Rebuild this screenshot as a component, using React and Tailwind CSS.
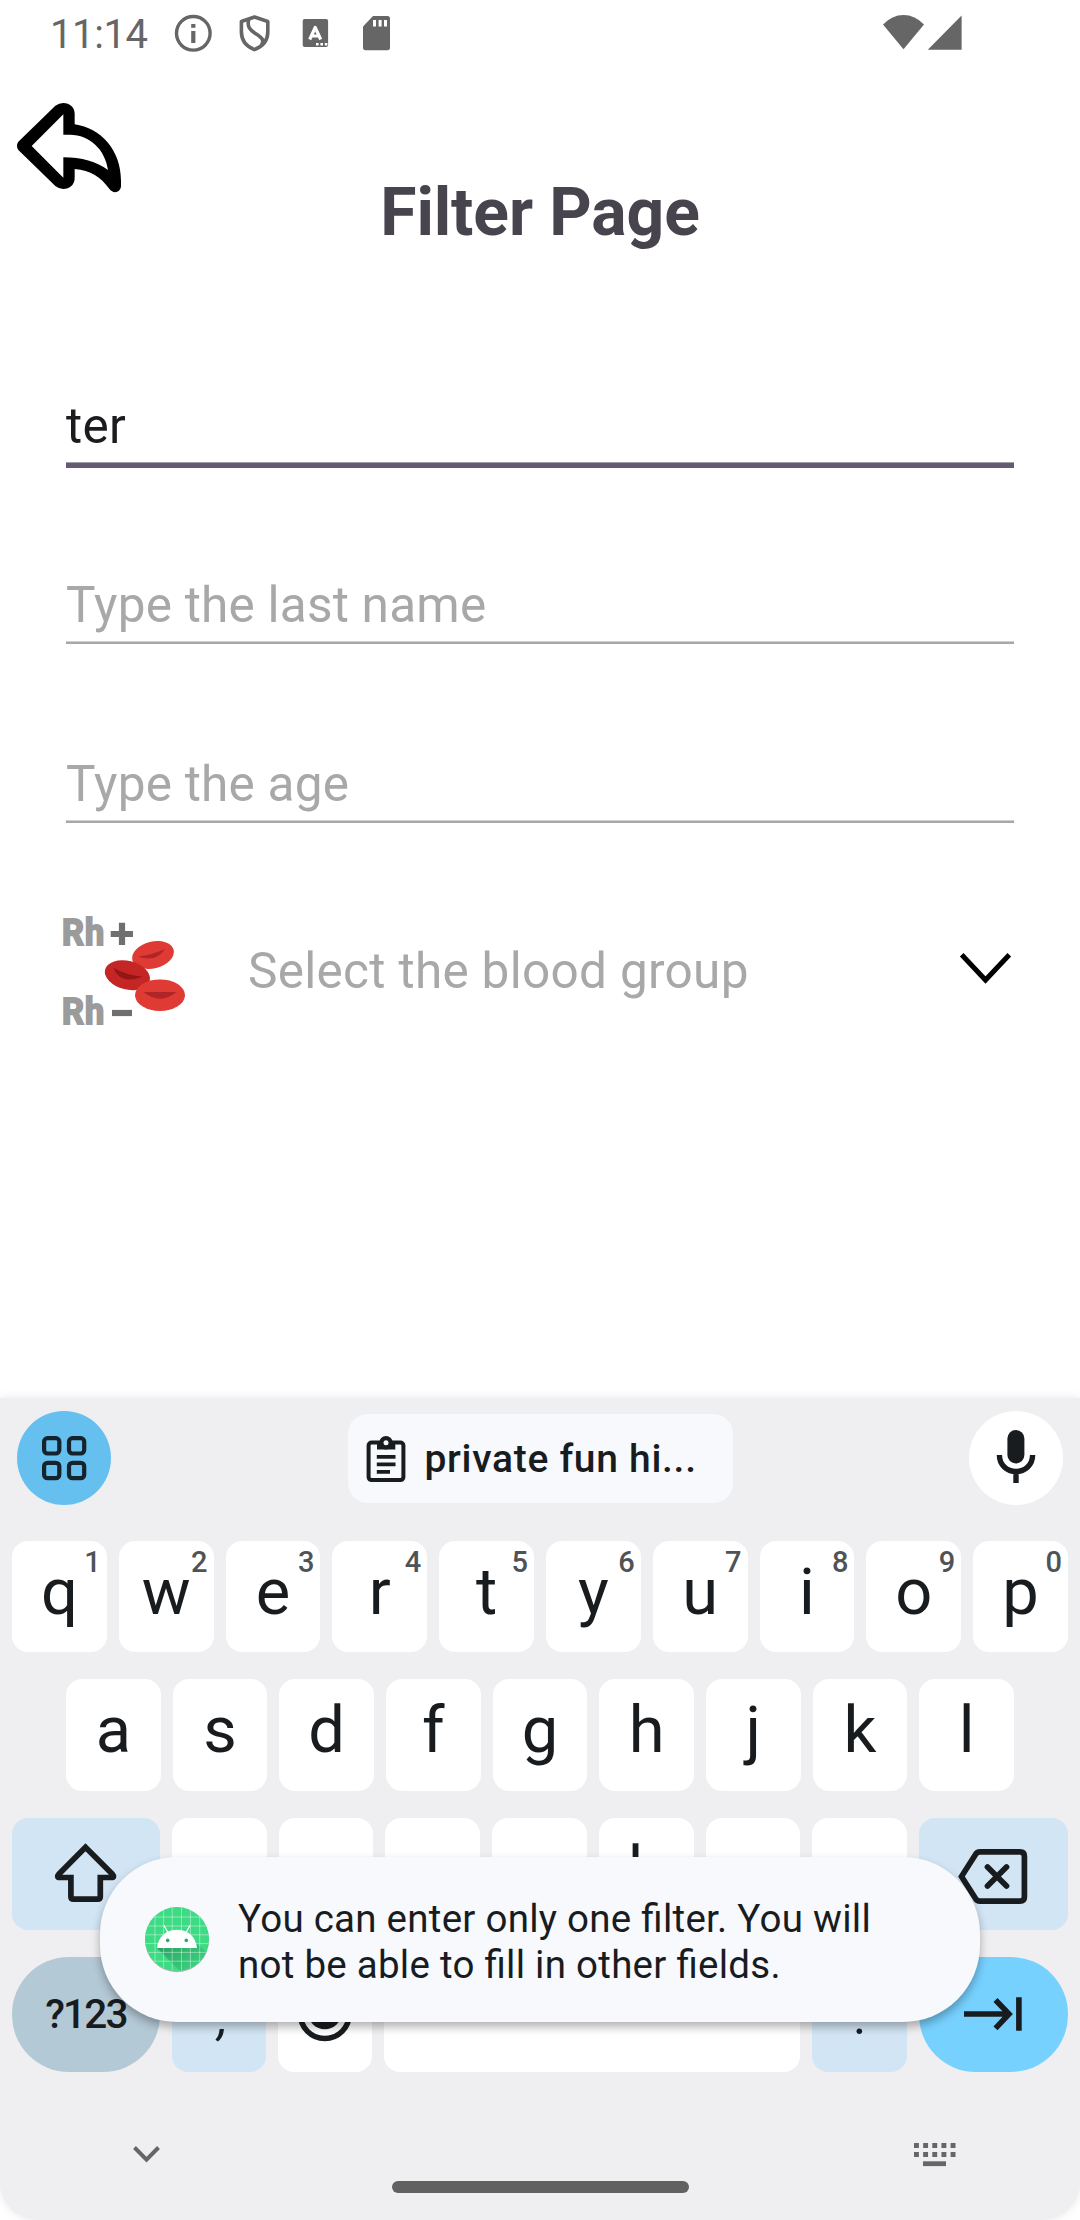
import React from "react";

const INK = "#191c1f";

function StatusBar() {
  return (
    <div className="flex h-[69px] items-center pl-[50px] text-[#666]">
      <span className="mr-[-12px] w-[134px] text-[40px] leading-[69px] tracking-[-0.4px]">11:14</span>
      <svg width="42" height="43" viewBox="172 13 42 43">
        <circle cx="193.3" cy="33.3" r="16.8" fill="none" stroke="#666" strokeWidth="3.4" />
        <rect x="191.2" y="24" width="4.2" height="3.8" fill="#666" />
        <rect x="191.2" y="31" width="4.2" height="12" fill="#666" />
      </svg>
      <svg className="ml-[18px]" width="45" height="43" viewBox="232 13 45 43" fill="none" stroke="#666" strokeWidth="3.6">
        <path d="M254.5 17L267.8 21.5V32C267.8 40.5 262.5 46.5 254.5 49.6C246.5 46.5 241.4 40.5 241.4 32V21.5Z" strokeLinejoin="round" />
        <path d="M248.6 19.5C247 27 250 30 255 33.2C262 37.5 265 40 261 46" />
      </svg>
      <svg className="ml-[18px]" width="42" height="43" viewBox="295 13 42 43">
        <rect x="302.7" y="19" width="25.4" height="28" rx="2" fill="#666" />
        <path d="M309.7 39.5L315.2 27.5L320.7 39.5M311.5 36H319" fill="none" stroke="#fff" strokeWidth="3.2" strokeLinejoin="round" />
        <path d="M316 43h2.6v2.4H316zM320.4 43h2.6v2.4h-2.6zM324.8 43h2.6v2.4h-2.6z" fill="#fff" />
      </svg>
      <svg className="ml-[18px]" width="42" height="43" viewBox="355 13 42 43">
        <path d="M373 16H387.5Q390 16 390 18.5V47.5Q390 50.2 387.5 50.2H365.5Q363 50.2 363 47.5V26.5Z" fill="#666" />
        <path d="M373 20h3v6.6h-3zM378.6 20h3v6.6h-3zM384 20h3v6.6h-3z" fill="#fff" />
      </svg>
      <svg className="ml-auto mr-[112px]" width="88" height="43" viewBox="880 13 88 43" fill="#666">
        <path d="M883 24.5Q892 15 903.5 15T924 24.5L903.5 49.3Z" />
        <path d="M961.6 15.5V49.8H927.8Z" />
      </svg>
    </div>
  );
}

function Header() {
  return (
    <div className="grid h-[187px] grid-cols-[140px_1fr_140px]">
      <svg width="140" height="187" viewBox="0 207 420 561">
        <path
          fillRule="evenodd"
          d="M55 425L166 317Q177 309 190 309C209 309 224 322 224 341V373C302 384 363 450 363 542V557C363 577 340 583 329 568C302 530 272 511 224 507V535C224 554 209 567 190 567Q177 567 166 558L55 450Q47 437 55 425ZM95 438L190 533V472C245 472 290 485 324 510C316 450 270 404 210 404H190V343Z"
        />
      </svg>
      <h1 className="pt-[100px] text-center text-[66px] font-bold leading-[88px] tracking-[-0.1px] text-[#48444e]">
        Filter Page
      </h1>
    </div>
  );
}

function Field({ children, active }) {
  return (
    <div
      className={
        active
          ? "flex h-[72px] items-start border-b-[5px] border-[#625b71] text-[#1c1b1f] shadow-[inset_0_-1px_0_#a39eac]"
          : "flex h-[69px] items-start border-b-2 border-[#a8a8aa] text-[#a8a8a9] shadow-[inset_0_-1px_0_#d0d0d1]"
      }
    >
      <span className="text-[49.5px] leading-[60px] tracking-[0.22px]">{children}</span>
    </div>
  );
}

function BloodIcon() {
  return (
    <svg className="overflow-visible" width="130" height="112" viewBox="60 915 130 112">
      <g fill="#9b9b9b" stroke="#9b9b9b" strokeWidth="2" fontFamily="Roboto" fontWeight="700" fontSize="37.5" letterSpacing="1">
        <text x="62" y="944.6" textLength="43" lengthAdjust="spacingAndGlyphs">Rh</text>
        <text x="62" y="1023.6" textLength="43" lengthAdjust="spacingAndGlyphs">Rh</text>
      </g>
      <path d="M110.7 934H133M122 922.7V945" stroke="#6f6f6f" strokeWidth="6.2" />
      <path d="M112 1013H132" stroke="#6f6f6f" strokeWidth="6.2" />
      <ellipse cx="153" cy="955" rx="21.3" ry="13.4" fill="#df3a33" transform="rotate(-14 153 955)" />
      <path d="M138 956.4Q152 955 165 949Q156 963 138 956.4Z" fill="#b02626" />
      <ellipse cx="127.4" cy="975.2" rx="23" ry="14.3" fill="#c42525" transform="rotate(14 127.4 975.2)" />
      <path d="M113.3 967.7Q126 975 142.6 976.8Q120 985 113.3 967.7Z" fill="#951515" />
      <ellipse cx="160" cy="995.2" rx="25" ry="15.8" fill="#df3a33" />
      <path d="M143.6 992H176.4Q160 1005.5 143.6 992Z" fill="#b02626" />
    </svg>
  );
}

function Key({ label, hint, low }) {
  return (
    <div
      className={
        low
          ? "flex flex-1 items-center justify-center rounded-[16px] bg-white pb-[6px] text-[64px] leading-none"
          : "relative flex flex-1 items-center justify-center rounded-[16px] bg-white pb-[9px] text-[65px] leading-none"
      }
    >
      {label}
      {hint && (
        <span className="absolute right-[6px] top-[6px] text-[29px] font-medium leading-[30px] text-[#505356]">{hint}</span>
      )}
    </div>
  );
}

function SuggestionBar() {
  return (
    <div className="flex h-[143px] items-start justify-between px-[17px] pt-[13px]">
      <div className="size-[94px] rounded-full bg-[#65c0ef]">
        <svg width="94" height="94" viewBox="17 1411 94 94" fill="none" stroke="#15242c" strokeWidth="4.2">
          <rect x="44.1" y="1438.1" width="15.2" height="15.4" rx="3.5" />
          <rect x="69" y="1438.1" width="15.2" height="15.4" rx="3.5" />
          <rect x="44.1" y="1462.8" width="15.2" height="15.4" rx="3.5" />
          <rect x="69" y="1462.8" width="15.2" height="15.4" rx="3.5" />
        </svg>
      </div>
      <div className="mt-[3px] flex h-[89px] w-[385px] items-center rounded-[20px] bg-[#f7f9fd] pl-[13px]">
        <svg width="52" height="60" viewBox="360.5 1428.5 52 60">
          <rect x="368.1" y="1442" width="34.8" height="37.6" rx="3" fill="none" stroke={INK} strokeWidth="4" />
          <path d="M376.5 1440.5H394.8V1449H376.5Z" fill={INK} />
          <circle cx="385.5" cy="1442.3" r="6.8" fill={INK} />
          <circle cx="385.5" cy="1442.3" r="2.5" fill="#f7f9fd" />
          <path d="M376.3 1456.3H395M376.3 1463.8H395M376.3 1471.3H389.5" stroke={INK} strokeWidth="3.7" />
        </svg>
        <span className="ml-[12px] text-[39px] font-medium leading-[46px] tracking-[0.7px]">private fun hi...</span>
      </div>
      <div className="size-[94px] rounded-full bg-white">
        <svg width="94" height="94" viewBox="969 1411 94 94">
          <rect x="1007.4" y="1430" width="17" height="33.5" rx="8.5" fill={INK} />
          <path d="M999.4 1455C999.4 1465 1007 1471.5 1016 1471.5S1032.6 1465 1032.6 1455M1016 1470V1483" fill="none" stroke={INK} strokeWidth="5.4" />
        </svg>
      </div>
    </div>
  );
}

function Keyboard() {
  const top = ["q", "w", "e", "r", "t", "y", "u", "i", "o", "p"];
  const home = ["a", "s", "d", "f", "g", "h", "j", "k", "l"];
  const low = ["z", "x", "c", "v", "b", "n", "m"];
  return (
    <div className="h-[822px] rounded-b-[38px] bg-[#efeff1] text-[#191c1f] shadow-[0_0_10px_rgba(0,0,0,0.1)]">
      <SuggestionBar />
      <div className="flex h-[111px] gap-[12px] px-[12px]">
        {top.map((k, i) => (
          <Key key={k} label={k} hint={String((i + 1) % 10)} />
        ))}
      </div>
      <div className="mt-[27px] flex h-[112px] gap-[12px] px-[66px]">
        {home.map((k) => (
          <Key key={k} label={k} />
        ))}
      </div>
      <div className="mt-[27px] flex h-[112px] gap-[12px] px-[12px]">
        <div className="w-[148px] rounded-[16px] bg-[#d2e5f4]">
          <svg width="148" height="112" viewBox="12 1818 148 112">
            <path
              d="M85.5 1847.3L59 1874Q55.9 1877.5 60 1877.5H70.9V1896.5Q70.9 1899.2 73.6 1899.2H97.6Q100.3 1899.2 100.3 1896.5V1877.5H111.2Q115.3 1877.5 112.2 1874Z"
              fill="none"
              stroke={INK}
              strokeWidth="5.7"
            />
          </svg>
        </div>
        {low.map((k) => (
          <Key key={k} label={k} low />
        ))}
        <div className="w-[149px] rounded-[16px] bg-[#d2e5f4]">
          <svg width="149" height="112" viewBox="919 1818 149 112" fill="none" stroke={INK} strokeWidth="5.7">
            <path d="M961.5 1876.5L975.5 1854.5Q977 1851.9 980 1851.9H1020Q1024.4 1851.9 1024.4 1856.3V1896.7Q1024.4 1901.1 1020 1901.1H980Q977 1901.1 975.5 1898.5Z" />
            <path d="M987.5 1867L1006.5 1886M1006.5 1867L987.5 1886" strokeLinecap="round" />
          </svg>
        </div>
      </div>
      <div className="mt-[27px] flex h-[115px] gap-[12px] px-[12px]">
        <div className="flex w-[148px] items-center justify-center rounded-[57px] bg-[#b4c9d6] text-[40.5px] font-medium tracking-[-1.8px]">
          ?123
        </div>
        <div className="flex w-[94px] items-center justify-center rounded-[16px] bg-[#d2e5f4] pl-[8px] pt-[5px] text-[50px] italic leading-none">
          ,
        </div>
        <div className="w-[94px] rounded-[16px] bg-white">
          <svg width="94" height="115" viewBox="278 1957 94 115">
            <circle cx="324.8" cy="2014" r="24.5" fill="none" stroke={INK} strokeWidth="5.5" />
            <path d="M308.5 2014H341.1A16.3 15.2 0 0 1 308.5 2014Z" fill={INK} />
            <circle cx="316" cy="2005.5" r="3.6" fill={INK} />
            <circle cx="333.6" cy="2005.5" r="3.6" fill={INK} />
          </svg>
        </div>
        <div className="flex-1 rounded-[16px] bg-white" />
        <div className="flex w-[95px] items-center justify-center rounded-[16px] bg-[#d2e5f4] pt-[5px] text-[50px] leading-none">.</div>
        <div className="w-[149px] rounded-[57px] bg-[#77d1ff]">
          <svg width="149" height="115" viewBox="919 1957 149 115" fill="none" stroke={INK} strokeWidth="5.6">
            <path d="M964 2014H1008.5M995.5 2000L1009 2014L995.5 2028.3M1018.9 1997.3V2030.7" />
          </svg>
        </div>
      </div>
      <div className="flex h-[109px] justify-between px-[124px] pt-[62px]">
        <svg width="46" height="36" viewBox="124 2134 46 36">
          <path d="M134.5 2147.5L146.5 2159.6L158.5 2147.5" fill="none" stroke="#666" strokeWidth="4" />
        </svg>
        <svg width="46" height="36" viewBox="910 2134 46 36" className="overflow-visible">
          <path d="M914 2145.4H956M914 2154.5H956" stroke="#666" strokeWidth="5" strokeDasharray="4.9 4.25" />
          <path d="M923 2163.7H946" stroke="#666" strokeWidth="4.8" />
        </svg>
      </div>
      <div className="mx-auto h-[12px] w-[297px] rounded-full bg-[#616161]" />
    </div>
  );
}

function RobotIcon() {
  const xs = [155, 163.6, 172.2, 181.5, 190.4, 199.7];
  const ys = [1916, 1925, 1933.8, 1942.6, 1951.4, 1960.2];
  return (
    <svg className="shrink-0" width="66" height="68" viewBox="144 1905 66 68">
      <defs>
        <clipPath id="disc">
          <circle cx="177" cy="1938" r="32" />
        </clipPath>
        <linearGradient id="cast" x1="0" y1="0" x2="1" y2="0.8">
          <stop offset="0" stopColor="#2a9a60" />
          <stop offset="1" stopColor="#3ddc84" />
        </linearGradient>
      </defs>
      <circle cx="177" cy="1939.2" r="32" fill="#a9b8b1" />
      <g clipPath="url(#disc)">
        <rect x="144" y="1905" width="66" height="66" fill="#3ddc84" />
        <path d="M157 1947L181 1971H212V1957L195.5 1941Z" fill="url(#cast)" />
        {xs.map((x) => (
          <path key={x} d={`M${x} 1905V1971`} stroke="#fff" strokeOpacity="0.4" />
        ))}
        {ys.map((y) => (
          <path key={y} d={`M144 ${y}H210`} stroke="#fff" strokeOpacity="0.4" />
        ))}
      </g>
      <path d="M157 1947C158 1936 166 1928.8 177 1928.8S196 1936 197 1947Z" fill="#fff" />
      <path d="M164 1924.5L168.5 1932.5M190 1924.5L185.5 1932.5" stroke="#fff" strokeWidth="1.3" />
      <circle cx="167.7" cy="1939.4" r="1.8" fill="#2fa866" />
      <circle cx="186.3" cy="1939.4" r="1.8" fill="#2fa866" />
    </svg>
  );
}

export default function App() {
  return (
    <div className="relative h-[2220px] w-[1080px] overflow-hidden bg-white font-['Roboto',sans-serif]">
      <div className="h-[1398px]">
        <StatusBar />
        <Header />
        <div className="mt-[140px] flex flex-col px-[66px]">
          <Field active>ter</Field>
          <div className="mt-[107px]">
            <Field>Type the last name</Field>
          </div>
          <div className="mt-[110px]">
            <Field>Type the age</Field>
          </div>
        </div>
        <div className="mt-[92px] flex h-[112px] items-center pl-[60px] pr-[64px]">
          <BloodIcon />
          <span className="ml-[58px] text-[49.5px] leading-[60px] tracking-[0.3px] text-[#a8a8a9]">
            Select the blood group
          </span>
          <svg className="ml-auto" width="60" height="40" viewBox="956 951 60 40">
            <path d="M961.7 954.7L985.5 980L1009.3 954.7" fill="none" stroke="#000" strokeWidth="5" />
          </svg>
        </div>
      </div>
      <Keyboard />
      <div className="absolute left-[100px] top-[1857px] flex h-[165px] w-[880px] items-center rounded-[77px] bg-[#f7f9fd] pl-[44px] shadow-[0_5px_10px_rgba(0,0,0,0.3)]">
        <RobotIcon />
        <p className="ml-[28px] whitespace-nowrap pt-[5px] text-[38.5px] leading-[46px] tracking-[0.26px] text-[#191c1f] [font-feature-settings:'liga'_1]">
          You can enter only one filter. You will
          <br />
          not be able to fill in other fields.
        </p>
      </div>
    </div>
  );
}
